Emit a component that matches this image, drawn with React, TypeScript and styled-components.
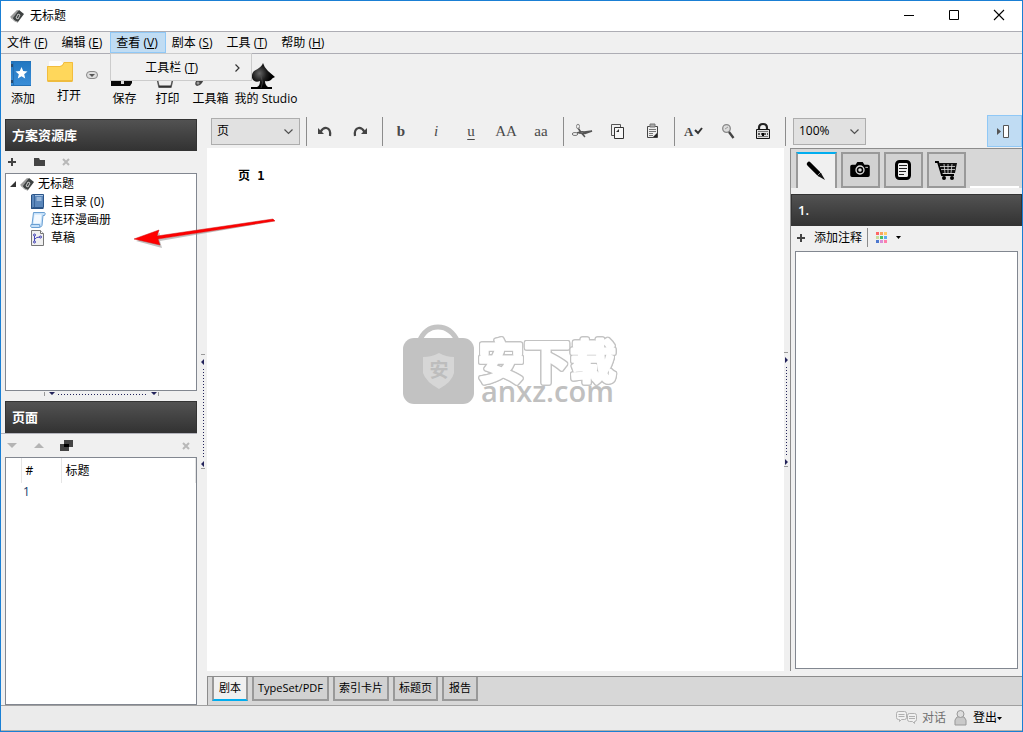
import React from 'react';
import styled, { createGlobalStyle, css } from 'styled-components';

const GlobalStyle = createGlobalStyle`
  * { box-sizing: border-box; }
  body {
    margin: 0;
    font: 12px/16px "Open Sans", "Noto Sans CJK SC", sans-serif;
    color: #000;
    background: #f0f0f0;
  }
  button, select { font: inherit; color: inherit; }
  svg { display: block; flex: none; overflow: visible; }
  ul, p, h1, h2 { margin: 0; padding: 0; font: inherit; }
  ul { list-style: none; }
`;

const Window = styled.div`
  display: flex;
  flex-direction: column;
  min-height: 100vh;
  border: 1px solid #1a7fd4;
  background: #f0f0f0;
`;

const TitleBar = styled.header`
  display: flex;
  align-items: center;
  height: 31px;
  padding-left: 9px;
  gap: 6px;
  background: #fff;
  border-bottom: 1px solid #adadb4;
`;

const Title = styled.h1`
  flex: 1;
`;

const WindowButtons = styled.div`
  display: flex;
  align-self: flex-start;
  padding-right: 1px;
`;

const WindowButton = styled.button`
  display: flex;
  align-items: center;
  justify-content: center;
  width: 45px;
  height: 28px;
  padding: 0;
  border: 0;
  background: none;
`;

const MenuBar = styled.nav`
  display: flex;
  height: 22px;
  border-bottom: 1px solid #adadb4;
`;

const MenuEntry = styled.div`
  position: relative;
`;

const MenuButton = styled.button<{ $open?: boolean }>`
  height: 21px;
  padding: 0 7px 0 5px;
  border: 1px solid ${p => (p.$open ? '#90c8f6' : 'transparent')};
  background: ${p => (p.$open ? '#c0dcf3' : 'none')};
  white-space: nowrap;
  line-height: 19px;
`;

const Popup = styled.div`
  position: absolute;
  z-index: 5;
  top: 21px;
  left: 0;
  width: 142px;
  height: 28px;
  border: 1px solid #ccc;
  background: #f0f0f0;
`;

const PopupItem = styled.button`
  display: flex;
  align-items: center;
  justify-content: space-between;
  width: 100%;
  height: 27px;
  padding: 0 11px 0 34px;
  border: 0;
  background: none;
`;

const MainToolbar = styled.div`
  display: flex;
  align-items: flex-start;
  height: 61px;
  padding-top: 7px;
`;

const ToolButton = styled.button<{ $width: number; $pad?: number; $align?: string }>`
  display: flex;
  flex-direction: column;
  align-items: ${p => p.$align || 'center'};
  gap: 5px;
  width: ${p => p.$width}px;
  padding: 0 ${p => p.$pad || 0}px;
  border: 0;
  background: none;
  white-space: nowrap;
`;

const EndLabel = styled.span`
  align-self: flex-end;
`;

const DropButton = styled.button`
  width: 20px;
  height: 28px;
  padding: 0 0 0 3px;
  border: 0;
  background: none;
`;

const Body = styled.div`
  display: flex;
  flex: 1;
`;

const Sidebar = styled.aside`
  display: flex;
  flex-direction: column;
  width: 196px;
  padding-top: 4px;
`;

const PanelHeader = styled.h2<{ $inset?: boolean }>`
  display: flex;
  align-items: center;
  height: 32px;
  margin-left: ${p => (p.$inset ? 4 : 0)}px;
  padding: 0 6px;
  border: 1px solid #333;
  background: linear-gradient(#525252, #333);
  color: #fff;
  font-size: 13px;
  font-weight: 600;
`;

const PanelToolbar = styled.div<{ $ruled?: boolean }>`
  display: flex;
  align-items: center;
  gap: 5px;
  height: ${p => (p.$ruled ? 24 : 22)}px;
  ${p => p.$ruled && css`border-top: 1px solid #b4b4bc;`}
`;

const SmallButton = styled.button<{ $end?: boolean }>`
  display: flex;
  align-items: center;
  justify-content: center;
  width: 22px;
  height: 20px;
  padding: 0;
  border: 0;
  background: none;
  ${p => p.$end && css`margin-left: auto;`}
`;

const Well = styled.div<{ $grow: number }>`
  flex: ${p => p.$grow} 1 0;
  margin-left: 4px;
  border: 1px solid #828790;
  background: #fff;
`;

const Tree = styled.ul`
  padding: 1px 4px;
`;

const TreeRow = styled.li<{ $child?: boolean }>`
  display: flex;
  align-items: center;
  gap: ${p => (p.$child ? 5 : 4)}px;
  height: 18px;
  padding-left: ${p => (p.$child ? 20 : 0)}px;
`;

const PageTable = styled.table`
  width: 100%;
  border-collapse: collapse;
  table-layout: fixed;
`;

const HeadCell = styled.th<{ $width?: number }>`
  width: ${p => (p.$width ? `${p.$width}px` : 'auto')};
  height: 25px;
  padding: 0 4px;
  border-right: 1px solid #e5e5e5;
  text-align: left;
  font-weight: 400;
`;

const Cell = styled.td`
  height: 18px;
  padding: 0 2px;
  color: #123a6b;
`;

const HSplitter = styled.div`
  display: flex;
  justify-content: center;
  height: 10px;
  padding-left: 6px;
`;

const VSplitter = styled.div<{ $width: number; $top?: number }>`
  display: flex;
  align-items: center;
  justify-content: flex-end;
  width: ${p => p.$width}px;
  padding: ${p => p.$top || 0}px 2px 0 0;
`;

const Main = styled.main`
  display: flex;
  flex-direction: column;
  flex: 1;
  min-width: 0;
`;

const FormatBar = styled.div`
  display: flex;
  align-items: center;
  height: 33px;
  padding: 0 0 1px 4px;
`;

const SelectBox = styled.div<{ $width: number }>`
  position: relative;
  width: ${p => p.$width}px;
  height: 27px;
`;

const Select = styled.select`
  width: 100%;
  height: 100%;
  padding: 0 5px;
  border: 1px solid #adadad;
  border-radius: 0;
  background: #e1e1e1;
  appearance: none;
`;

const SelectArrow = styled.svg`
  position: absolute;
  top: 11px;
  right: 7px;
  pointer-events: none;
`;

const Separator = styled.span<{ $first?: boolean; $last?: boolean }>`
  width: 1px;
  height: 29px;
  margin: 0 ${p => (p.$last ? 7 : 1)}px 0 ${p => (p.$first ? 6 : 4)}px;
  background: #8c8c8c;
`;

const FormatButton = styled.button<{ $bold?: boolean; $italic?: boolean; $underline?: boolean }>`
  display: flex;
  align-items: center;
  justify-content: center;
  width: 35px;
  height: 28px;
  padding: 0 1px 0 0;
  border: 0;
  background: none;
  color: #4a4a4a;
  font: ${p => (p.$italic ? 'italic' : 'normal')} ${p => (p.$bold ? 700 : 400)} 15px/20px "Liberation Serif", serif;
  ${p => p.$underline && css`text-decoration: underline; text-underline-offset: 3px;`}
`;

const PaneToggle = styled.button`
  display: flex;
  align-items: center;
  justify-content: center;
  width: 35px;
  height: 32px;
  margin-left: auto;
  padding: 0 3px 0 0;
  border: 1px solid #90c8f6;
  background: #c0dcf3;
`;

const WorkRow = styled.div`
  display: flex;
  flex: 1;
`;

const Page = styled.article`
  position: relative;
  flex: 1;
  padding: 20px 31px;
  background: #fff;
  font: 700 12px/16px "DejaVu Sans Mono", "Noto Sans CJK SC", monospace;
`;

const Watermark = styled.svg`
  position: absolute;
  left: 194px;
  top: 174px;
`;

const OutlinedText = styled.text`
  fill: #fff;
  stroke: #fff;
  stroke-width: 3px;
  stroke-linejoin: round;
  filter: drop-shadow(1px 0 0 #c2c2c2) drop-shadow(-1px 0 0 #c2c2c2) drop-shadow(0 1px 0 #c2c2c2) drop-shadow(0 -1px 0 #c2c2c2);
`;

const Notes = styled.section`
  display: flex;
  flex-direction: column;
  width: 232px;
  border-left: 1px solid #8c8c8c;
`;

const NoteTabs = styled.div`
  display: flex;
  gap: 4px;
  height: 40px;
  margin-bottom: 6px;
  padding: 3px 3px 0 5px;
  border-top: 1px solid #8c8c8c;
  background: #d7d7d7;
`;

const NoteTab = styled.button<{ $active?: boolean }>`
  display: flex;
  align-items: center;
  justify-content: center;
  width: ${p => (p.$active ? 41 : 39)}px;
  height: 36px;
  padding: 0 1px 0 0;
  border: 2px solid #999;
  background: #d2d2d2;
  ${p => p.$active && css`
    border-top-color: #00adef;
    border-bottom: 0;
    background: #f0f0f0;
  `}
`;

const TabShelf = styled.span`
  flex: 1;
  align-self: flex-end;
  height: 2px;
  background: #fff;
`;

const NoteToolbar = styled.div`
  display: flex;
  align-items: center;
  height: 25px;
  padding: 0 0 2px 6px;
`;

const TextButton = styled.button<{ $gap: number }>`
  display: flex;
  align-items: center;
  gap: ${p => p.$gap}px;
  padding: 0;
  border: 0;
  background: none;
  white-space: nowrap;
`;

const NoteDivider = styled.span`
  width: 1px;
  height: 19px;
  margin: 0 8px 0 5px;
  background: #8c8c8c;
`;

const NoteArea = styled.textarea`
  flex: 1;
  margin: 0 4px 2px;
  border: 1px solid #828790;
  background: #fff;
  resize: none;
`;

const ViewTabs = styled.div`
  display: flex;
  gap: 4px;
  height: 29px;
  margin-top: 5px;
  padding-left: 4px;
  border-top: 1px solid #8c8c8c;
  border-left: 1px solid #8c8c8c;
  background: #d7d7d7;
`;

const ViewTab = styled.button<{ $active?: boolean }>`
  min-width: 36px;
  height: 24px;
  padding: 0 4px;
  border: 2px solid #999;
  border-top: 0;
  background: #d2d2d2;
  font-size: 11px;
  white-space: nowrap;
  ${p => p.$active && css`
    border-bottom-color: #00adef;
    background: #f0f0f0;
  `}
`;

const StatusBar = styled.footer`
  display: flex;
  align-items: center;
  justify-content: flex-end;
  gap: 8px;
  height: 26px;
  padding-right: 20px;
  border-top: 1px solid #a0a0a0;
  border-bottom: 1px solid #b4b0ac;
  background: #ebebeb;
`;

const StatusButton = styled.button<{ $muted?: boolean }>`
  display: flex;
  align-items: center;
  gap: ${p => (p.$muted ? 5 : 6)}px;
  padding: 0;
  border: 0;
  background: none;
  color: ${p => (p.$muted ? '#707070' : '#000')};
`;

const WithCaret = styled.span`
  display: flex;
  align-items: center;
`;

const Arrow = styled.svg`
  position: absolute;
  left: 130px;
  top: 214px;
  pointer-events: none;
`;

const AppIcon = () => (
  <svg width="14" height="14" viewBox="0 0 14 14">
    <path d="M0 8 7 1l3 1-6 9z" fill="#9a9a9a" />
    <path d="M3 9 9 1l5 4-6 8-4-1z" fill="#3e4242" />
    <path d="m6 9 2-4 2 1-2 4z" fill="none" stroke="#ccc" />
    <path d="m1 9 4 3 3 1.500" stroke="#b5b5b5" fill="none" />
  </svg>
);

const BookIcon = () => (
  <svg width="16" height="16" viewBox="0 0 16 16">
    <path d="M1.500 1.500q0-1 1-1h11v13h-11q-1 0-1 1z" fill="#5b87bb" stroke="#2b5589" />
    <path d="M1.500 1v13.500h12" fill="none" stroke="#264f82" />
    <path d="M4.500 1v12" stroke="#3a659b" />
    <path d="M5 1.500h8" stroke="#a9c6e6" />
    <path d="M6.500 4h5M6.500 6h5" stroke="#d5e5f5" />
  </svg>
);

const ScrollIcon = () => (
  <svg width="16" height="16" viewBox="0 0 16 16">
    <path d="M3.500.5h11q1.500 1 0 3h-1.500l-1 10q-1 2-3 2H1.500q-1.500-1-.5-3h1z" fill="#c5e0f9" stroke="#6a9fd2" />
    <path d="M4.500 2.500h7l-1 9h-7z" fill="#f3f9ff" />
    <path d="M2 12.500h7.500l.5 2.500" stroke="#6a9fd2" fill="none" />
  </svg>
);

const DraftIcon = () => (
  <svg width="16" height="16" viewBox="0 0 16 16">
    <path d="M1.500.5h9l3 3v12h-12z" fill="#f0f0f0" stroke="#777" />
    <path d="M10.500.5v3h3" fill="#fff" stroke="#777" />
    <path d="M4.500 5v7M5 9q1-2 5-2" stroke="#4444b8" fill="none" />
    <g fill="#fff" stroke="#3838b0"><circle cx="4.500" cy="5" r="1" /><circle cx="4.500" cy="12" r="1" /><circle cx="10.500" cy="7" r="1" /></g>
  </svg>
);

const PlusIcon = () => (
  <svg width="8" height="8"><path d="M4 0v8M0 4h8" stroke="#444" strokeWidth="2" /></svg>
);

const CrossIcon = () => (
  <svg width="8" height="8"><path d="m1 1 6 6M7 1 1 7" stroke="#b8b8b8" strokeWidth="2" /></svg>
);

const Chevron = () => (
  <SelectArrow width="9" height="5"><path d="m.5.5 4 4 4-4" fill="none" stroke="#505050" strokeWidth="1.200" /></SelectArrow>
);

const SplitterGrip = ({ right }: { right?: boolean }) => (
  <svg width="4" height="116" viewBox="0 0 4 116">
    <path d="M0 .5h4M0 114.500h4" stroke="#999" />
    <path d={right ? 'M1 5v6l3-3zM1 107v6l3-3z' : 'M3 5v6L0 8zM3 107v6l-3-3z'} fill="#23235a" />
    <path d="M2.500 15v89" stroke="#23235a" strokeDasharray="1 2" />
  </svg>
);

const menus: [string, string][] = [
  ['文件', 'F'], ['编辑', 'E'], ['查看', 'V'], ['剧本', 'S'], ['工具', 'T'], ['帮助', 'H'],
];

const views = ['剧本', 'TypeSet/PDF', '索引卡片', '标题页', '报告'];

export default function App() {
  return (
    <Window>
      <GlobalStyle />
      <TitleBar>
        <AppIcon />
        <Title>无标题</Title>
        <WindowButtons>
          <WindowButton aria-label="最小化"><svg width="10" height="10"><path d="M0 5.500h10" stroke="#000" /></svg></WindowButton>
          <WindowButton aria-label="最大化"><svg width="10" height="10"><path d="M.5.5h9v9h-9z" fill="none" stroke="#000" /></svg></WindowButton>
          <WindowButton aria-label="关闭"><svg width="10" height="10"><path d="m0 0 10 10M10 0 0 10" stroke="#000" strokeWidth="1.100" /></svg></WindowButton>
        </WindowButtons>
      </TitleBar>

      <MenuBar>
        {menus.map(([label, key]) => (
          <MenuEntry key={key}>
            <MenuButton $open={key === 'V'}>{label} (<u>{key}</u>)</MenuButton>
            {key === 'V' && (
              <Popup>
                <PopupItem>
                  <span>工具栏 (<u>T</u>)</span>
                  <svg width="5" height="8"><path d="m.5.5 3.500 3.500L.5 7.500" fill="none" stroke="#333" strokeWidth="1.200" /></svg>
                </PopupItem>
              </Popup>
            )}
          </MenuEntry>
        ))}
      </MenuBar>

      <MainToolbar>
        <ToolButton $width={44} $pad={10} $align="flex-start">
          <svg width="20" height="25" viewBox="0 0 20 25">
            <defs><linearGradient id="blue" x2="0" y2="1"><stop stopColor="#2176c0" /><stop offset="1" stopColor="#3a8ed8" /></linearGradient></defs>
            <path d="M0 0h20v25H0z" fill="url(#blue)" />
            <path d="M0 3h2v3H0zM0 19h2v3H0z" fill="#274b70" />
            <path d="M2.500 0v25M0 .5h20M0 24.500h20" stroke="#2470b5" />
            <path d="m10.500 6 1.700 4 4.300.4-3.300 2.800 1 4.300-3.700-2.300-3.700 2.300 1-4.300-3.300-2.800 4.300-.4z" fill="#fff" />
          </svg>
          <span>添加</span>
        </ToolButton>
        <ToolButton $width={38} $pad={2} $align="flex-start">
          <svg width="26" height="22" viewBox="0 0 26 22">
            <path d="M2 1q0-1 1-1h11l2 2v5H2z" fill="#fdfdfd" />
            <path d="M0 5h13q2 0 3-2l1-2h8q1 0 1 1v17q0 1-1 1H1q-1 0-1-1z" fill="#ffd75b" />
            <path d="M.5 19V5.500H13q3 0 4-4h8.500V19" fill="none" stroke="#f2bd3d" />
            <path d="M0 19q0 2 1 2h24q1 0 1-2z" fill="#efbc3e" />
          </svg>
          <EndLabel>打开</EndLabel>
        </ToolButton>
        <DropButton aria-label="打开选项">
          <svg width="12" height="8" viewBox="0 0 12 8"><rect x=".5" y=".5" width="11" height="7" rx="3.500" fill="#ddd" stroke="#888" /><path d="M3 3h6L6 6z" fill="#555" /></svg>
        </DropButton>
        <ToolButton $width={43}>
          <svg width="30" height="25" viewBox="0 0 30 25"><path d="M1 0h21v22l-2 3H1z" fill="#080808" /><path d="M11 18h3v5h-3z" fill="#ddd" /></svg>
          <span>保存</span>
        </ToolButton>
        <ToolButton $width={43}>
          <svg width="26" height="25" viewBox="0 0 26 25"><path d="M1 8h18v12H1z" fill="#555" /><path d="M2 17h16l-2 9H4z" fill="#eee" stroke="#555" strokeWidth="1.500" /><path d="M4 25.500h12" stroke="#333" strokeWidth="2" /></svg>
          <span>打印</span>
        </ToolButton>
        <ToolButton $width={43}>
          <svg width="34" height="25" viewBox="0 0 34 25"><path d="m12 8-10 12q-2 4 1 5 3 0 5-3l7-12z" fill="#444" /><circle cx="4" cy="22" r="1.500" fill="#999" /></svg>
          <span>工具箱</span>
        </ToolButton>
        <ToolButton $width={68}>
          <svg width="32" height="25" viewBox="0 0 32 25">
            <defs><radialGradient id="spade" cx=".35" cy=".4" r=".5"><stop stopColor="#666" /><stop offset=".6" stopColor="#1c1c1c" /><stop offset="1" stopColor="#000" /></radialGradient></defs>
            <path d="M13 2q1 4 5 8l7 6q-3 1-4 3-3 2-6 1 0 4 3 6h4v2H1v-2h6q3-1 3-6-4 2-7-1-3-5 1-9 8-4 9-8" fill="url(#spade)" />
            <path d="M11 27q3-5 0-12" fill="none" stroke="#555" strokeWidth=".6" />
          </svg>
          <span>我的 Studio</span>
        </ToolButton>
      </MainToolbar>

      <Body>
        <Sidebar>
          <PanelHeader $inset>方案资源库</PanelHeader>
          <PanelToolbar>
            <SmallButton aria-label="新增"><PlusIcon /></SmallButton>
            <SmallButton aria-label="文件夹"><svg width="11" height="8"><path d="M0 0h5l1 2h5v6H0z" fill="#444" /></svg></SmallButton>
            <SmallButton aria-label="删除"><CrossIcon /></SmallButton>
          </PanelToolbar>
          <Well $grow={218}>
            <Tree>
              <TreeRow>
                <svg width="6" height="6"><path d="M6 0v6H0z" fill="#333" /></svg>
                <AppIcon /><span>无标题</span>
              </TreeRow>
              <TreeRow $child><BookIcon /><span>主目录 (0)</span></TreeRow>
              <TreeRow $child><ScrollIcon /><span>连环漫画册</span></TreeRow>
              <TreeRow $child><DraftIcon /><span>草稿</span></TreeRow>
            </Tree>
          </Well>
          <HSplitter>
            <svg width="116" height="5" viewBox="0 0 116 5">
              <path d="M.5 1v4M114.500 1v4" stroke="#999" />
              <path d="M5 1h6L8 4zM107 1h6l-3 3z" fill="#23235a" />
              <path d="M14 3.500h90" stroke="#23235a" strokeDasharray="1 2" />
            </svg>
          </HSplitter>
          <PanelHeader $inset>页面</PanelHeader>
          <PanelToolbar $ruled>
            <SmallButton aria-label="下移"><svg width="10" height="5"><path d="M0 0h10L5 5z" fill="#b4b4b4" /></svg></SmallButton>
            <SmallButton aria-label="上移"><svg width="10" height="5"><path d="M0 5h10L5 0z" fill="#b4b4b4" /></svg></SmallButton>
            <SmallButton aria-label="复制页面"><svg width="13" height="11"><path d="M4 0h9v7H4zM0 4h9v7H0z" fill="#444" /><path d="M4 4h5v3H4z" fill="#000" /></svg></SmallButton>
            <SmallButton $end aria-label="删除页面"><CrossIcon /></SmallButton>
          </PanelToolbar>
          <Well $grow={248}>
            <PageTable>
              <thead><tr><HeadCell $width={15} aria-label="状态" /><HeadCell $width={40}>#</HeadCell><HeadCell>标题</HeadCell></tr></thead>
              <tbody><tr><Cell /><Cell>1</Cell><Cell /></tr></tbody>
            </PageTable>
          </Well>
        </Sidebar>

        <VSplitter $width={10} $top={3}><SplitterGrip /></VSplitter>

        <Main>
          <FormatBar>
            <SelectBox $width={89}>
              <Select aria-label="元素类型" defaultValue="页"><option>页</option></Select><Chevron />
            </SelectBox>
            <Separator $first />
            <FormatButton aria-label="撤销"><svg width="14" height="11" viewBox="0 0 14 11"><path d="M2.500 6Q5 1.500 8.500 2 13 3 12 10" fill="none" stroke="#444" strokeWidth="2.200" /><path d="M0 2v6h6z" fill="#444" /></svg></FormatButton>
            <FormatButton aria-label="重做"><svg width="14" height="11" viewBox="0 0 14 11"><path d="M11.500 6Q9 1.500 5.500 2 1 3 2 10" fill="none" stroke="#444" strokeWidth="2.200" /><path d="M14 2v6H8z" fill="#444" /></svg></FormatButton>
            <Separator />
            <FormatButton $bold>b</FormatButton>
            <FormatButton $italic>i</FormatButton>
            <FormatButton $underline>u</FormatButton>
            <FormatButton>AA</FormatButton>
            <FormatButton>aa</FormatButton>
            <Separator />
            <FormatButton aria-label="剪切">
              <svg width="20" height="14" viewBox="0 0 20 14"><path d="M6 4q3 5 7 9M5 9q5-2 7-1l8-1-7 2.500-6-.5" fill="none" stroke="#555" strokeWidth="1.500" /><ellipse cx="6" cy="2.500" rx="1.500" ry="2.300" fill="none" stroke="#888" /><ellipse cx="3" cy="10" rx="2.800" ry="1.500" fill="none" stroke="#777" /></svg>
            </FormatButton>
            <FormatButton aria-label="复制">
              <svg width="13" height="15" viewBox="0 0 13 15"><path d="M.5.5h9v11h-9z" fill="#f0f0f0" stroke="#555" /><path d="M3.500 3.500h9v11h-9z" fill="#f7f7f7" stroke="#333" /><path d="M5 8h3V5z" fill="#333" /></svg>
            </FormatButton>
            <FormatButton aria-label="粘贴">
              <svg width="11" height="14" viewBox="0 0 11 14"><path d="M.5 2.500h10v11H.5z" fill="#eee" stroke="#444" /><path d="M3 0h5v3H3z" fill="#aaa" stroke="#777" /><path d="M2 5.500h7M2 7.500h7M2 9.500h4M2 11.500h4" stroke="#777" /><path d="M6 13h4V9z" fill="#222" /></svg>
            </FormatButton>
            <Separator />
            <FormatButton aria-label="拼写检查">
              <svg width="18" height="14" viewBox="0 0 18 14"><text x="0" y="12" fontSize="13" fontWeight="700" fontFamily="Liberation Serif" fill="#444">A</text><path d="m11 6 3 3 4-5" stroke="#333" strokeWidth="2" fill="none" /></svg>
            </FormatButton>
            <FormatButton aria-label="查找">
              <svg width="12" height="15" viewBox="0 0 12 15"><circle cx="4.500" cy="4.500" r="3.800" fill="#ddd" stroke="#888" strokeWidth="1.300" /><path d="m7 8 4.500 6" stroke="#444" strokeWidth="2.400" /><path d="m3 5 3-2" stroke="#999" /></svg>
            </FormatButton>
            <FormatButton aria-label="锁定">
              <svg width="14" height="16" viewBox="0 0 14 16"><path d="M3 8V5q0-4 4-4t4 4v3" fill="none" stroke="#222" strokeWidth="2.200" /><path d="M.5 6.500h13v9H.5z" fill="#ddd" stroke="#111" /><path d="M2 8.500h10M2 13.500h10" stroke="#777" /><path d="M2 11h10" stroke="#555" strokeWidth="2" strokeDasharray="2 1" /><path d="M6 10h2v3H6z" fill="#000" /></svg>
            </FormatButton>
            <Separator $last />
            <SelectBox $width={73}>
              <Select aria-label="缩放" defaultValue="100%"><option>100%</option></Select><Chevron />
            </SelectBox>
            <PaneToggle aria-label="显示侧栏">
              <svg width="12" height="13" viewBox="0 0 12 13"><path d="M0 3v7l4-3.500z" fill="#555" /><path d="M6.500.5h5v12h-5z" fill="#fff" stroke="#555" /></svg>
            </PaneToggle>
          </FormatBar>

          <WorkRow>
            <Page>
              <p>页 1</p>
              <Watermark width="218" height="84" viewBox="0 0 218 84">
                <path d="M18 20Q24 5 37 5t20 15" fill="none" stroke="#c4c4c4" strokeWidth="5" />
                <rect x="2" y="16" width="71" height="66" rx="11" fill="#c2c2c2" />
                <path d="M38 31q7 4 15 4v16q-2 9-15 16-13-7-16-16V35q9 0 16-4" fill="#d6d6d6" />
                <text x="38" y="55" textAnchor="middle" fontFamily="Noto Sans CJK SC" fontSize="19" fontWeight="700" fill="#bdbdbd">安</text>
                <OutlinedText x="77" y="56" fontFamily="Noto Sans CJK SC" fontSize="46" fontWeight="700">安下载</OutlinedText>
                <text x="80" y="80" fontFamily="Open Sans, sans-serif" fontSize="29" fontWeight="600" fill="#c0c0c0">anxz.com</text>
              </Watermark>
            </Page>
            <VSplitter $width={6}><SplitterGrip right /></VSplitter>
            <Notes>
              <NoteTabs>
                <NoteTab $active aria-label="注释">
                  <svg width="20" height="20" viewBox="0 0 20 20"><path d="m3 3 10 10" stroke="#000" strokeWidth="4.500" strokeLinecap="round" /><path d="m12 15 3-3 4 7z" fill="#111" /><path d="m11.500 14.500 3.500-3.500" stroke="#f0f0f0" strokeWidth=".6" /></svg>
                </NoteTab>
                <NoteTab aria-label="图片">
                  <svg width="20" height="16" viewBox="0 0 22 18"><path d="M2 3h4l2-3h6l2 3h4q2 0 2 2v10q0 2-2 2H2q-2 0-2-2V5q0-2 2-2" fill="#000" /><circle cx="11" cy="9" r="4.500" fill="none" stroke="#ddd" strokeWidth="1.500" /><circle cx="11" cy="9" r="2" fill="#ddd" /><path d="M17 6h3" stroke="#ddd" /></svg>
                </NoteTab>
                <NoteTab aria-label="文档">
                  <svg width="16" height="20" viewBox="0 0 16 20"><rect x="1.500" y="1.500" width="13" height="17" rx="3" fill="#eee" stroke="#000" strokeWidth="3" /><path d="M4 5.500h8M4 8.500h8M4 11.500h7M4 14.500h5" stroke="#222" /></svg>
                </NoteTab>
                <NoteTab aria-label="商店">
                  <svg width="22" height="19" viewBox="0 0 22 19"><path d="M0 1h3l4 13h12" fill="none" stroke="#000" strokeWidth="2" /><path d="M4 2h18l-2 10H7z" fill="#111" /><path d="M5 5.500h15M6 8.500h14M9 3l1 9M13 3v9M17 3l-1 9" stroke="#ddd" strokeWidth=".8" /><circle cx="9" cy="17" r="2" /><circle cx="17" cy="17" r="2" /></svg>
                </NoteTab>
                <TabShelf />
              </NoteTabs>
              <PanelHeader>1.</PanelHeader>
              <NoteToolbar>
                <TextButton $gap={9}><PlusIcon />添加注释</TextButton>
                <NoteDivider />
                <TextButton $gap={9} aria-label="颜色">
                  <svg width="11" height="11" viewBox="0 0 11 11">
                    {['#f66', '#f9a35c', '#fc6', '#c6dd9b', '#4abf60', '#5ba8ed', '#4d78cf', '#d98ed7', '#ff7eaa'].map((c, i) => (
                      <rect key={c} x={(i % 3) * 4} y={Math.floor(i / 3) * 4} width="3" height="3" fill={c} />
                    ))}
                  </svg>
                  <svg width="5" height="3"><path d="M0 0h5L2.500 3z" /></svg>
                </TextButton>
              </NoteToolbar>
              <NoteArea aria-label="注释内容" />
            </Notes>
          </WorkRow>

          <ViewTabs>
            {views.map((view, i) => <ViewTab key={view} $active={i === 0}>{view}</ViewTab>)}
          </ViewTabs>
        </Main>
      </Body>

      <StatusBar>
        <StatusButton $muted>
          <svg width="21" height="14" viewBox="0 0 21 14"><path d="M2.500.5h6q2 0 2 2v4q0 2-2 2h-3l-2 2v-2h-1q-2 0-2-2v-4q0-2 2-2M13.500 2.500h5q2 0 2 2v4q0 2-2 2v2l-2-2h-3q-2 0-2-2v-4q0-2 2-2" fill="#f0f0f0" stroke="#b0b0b0" /><path d="M2.500 3.500h6M2.500 5.500h6M13 5.500h6M13 7.500h6" stroke="#b0b0b0" /></svg>
          对话
        </StatusButton>
        <StatusButton>
          <svg width="13" height="16" viewBox="0 0 13 16"><path d="M1 15q-1-6 2-8 3-1 7 0 3 2 2 8z" fill="#c9c9c9" stroke="#999" /><circle cx="6.500" cy="4" r="3.500" fill="#ddd" stroke="#999" /></svg>
          <WithCaret>登出<svg width="5" height="3"><path d="M0 0h5L2.500 3z" /></svg></WithCaret>
        </StatusButton>
      </StatusBar>

      <Arrow width="150" height="34" viewBox="0 0 150 34">
        <path d="m6 27 24-8-1 6L146 7l-116 20 2 7z" fill="#999" opacity=".6" />
        <path d="m4 25 25-9-2 6L143 5l2 2L28 25l2 6z" fill="#f00" stroke="#c11" strokeWidth=".5" />
      </Arrow>
    </Window>
  );
}
